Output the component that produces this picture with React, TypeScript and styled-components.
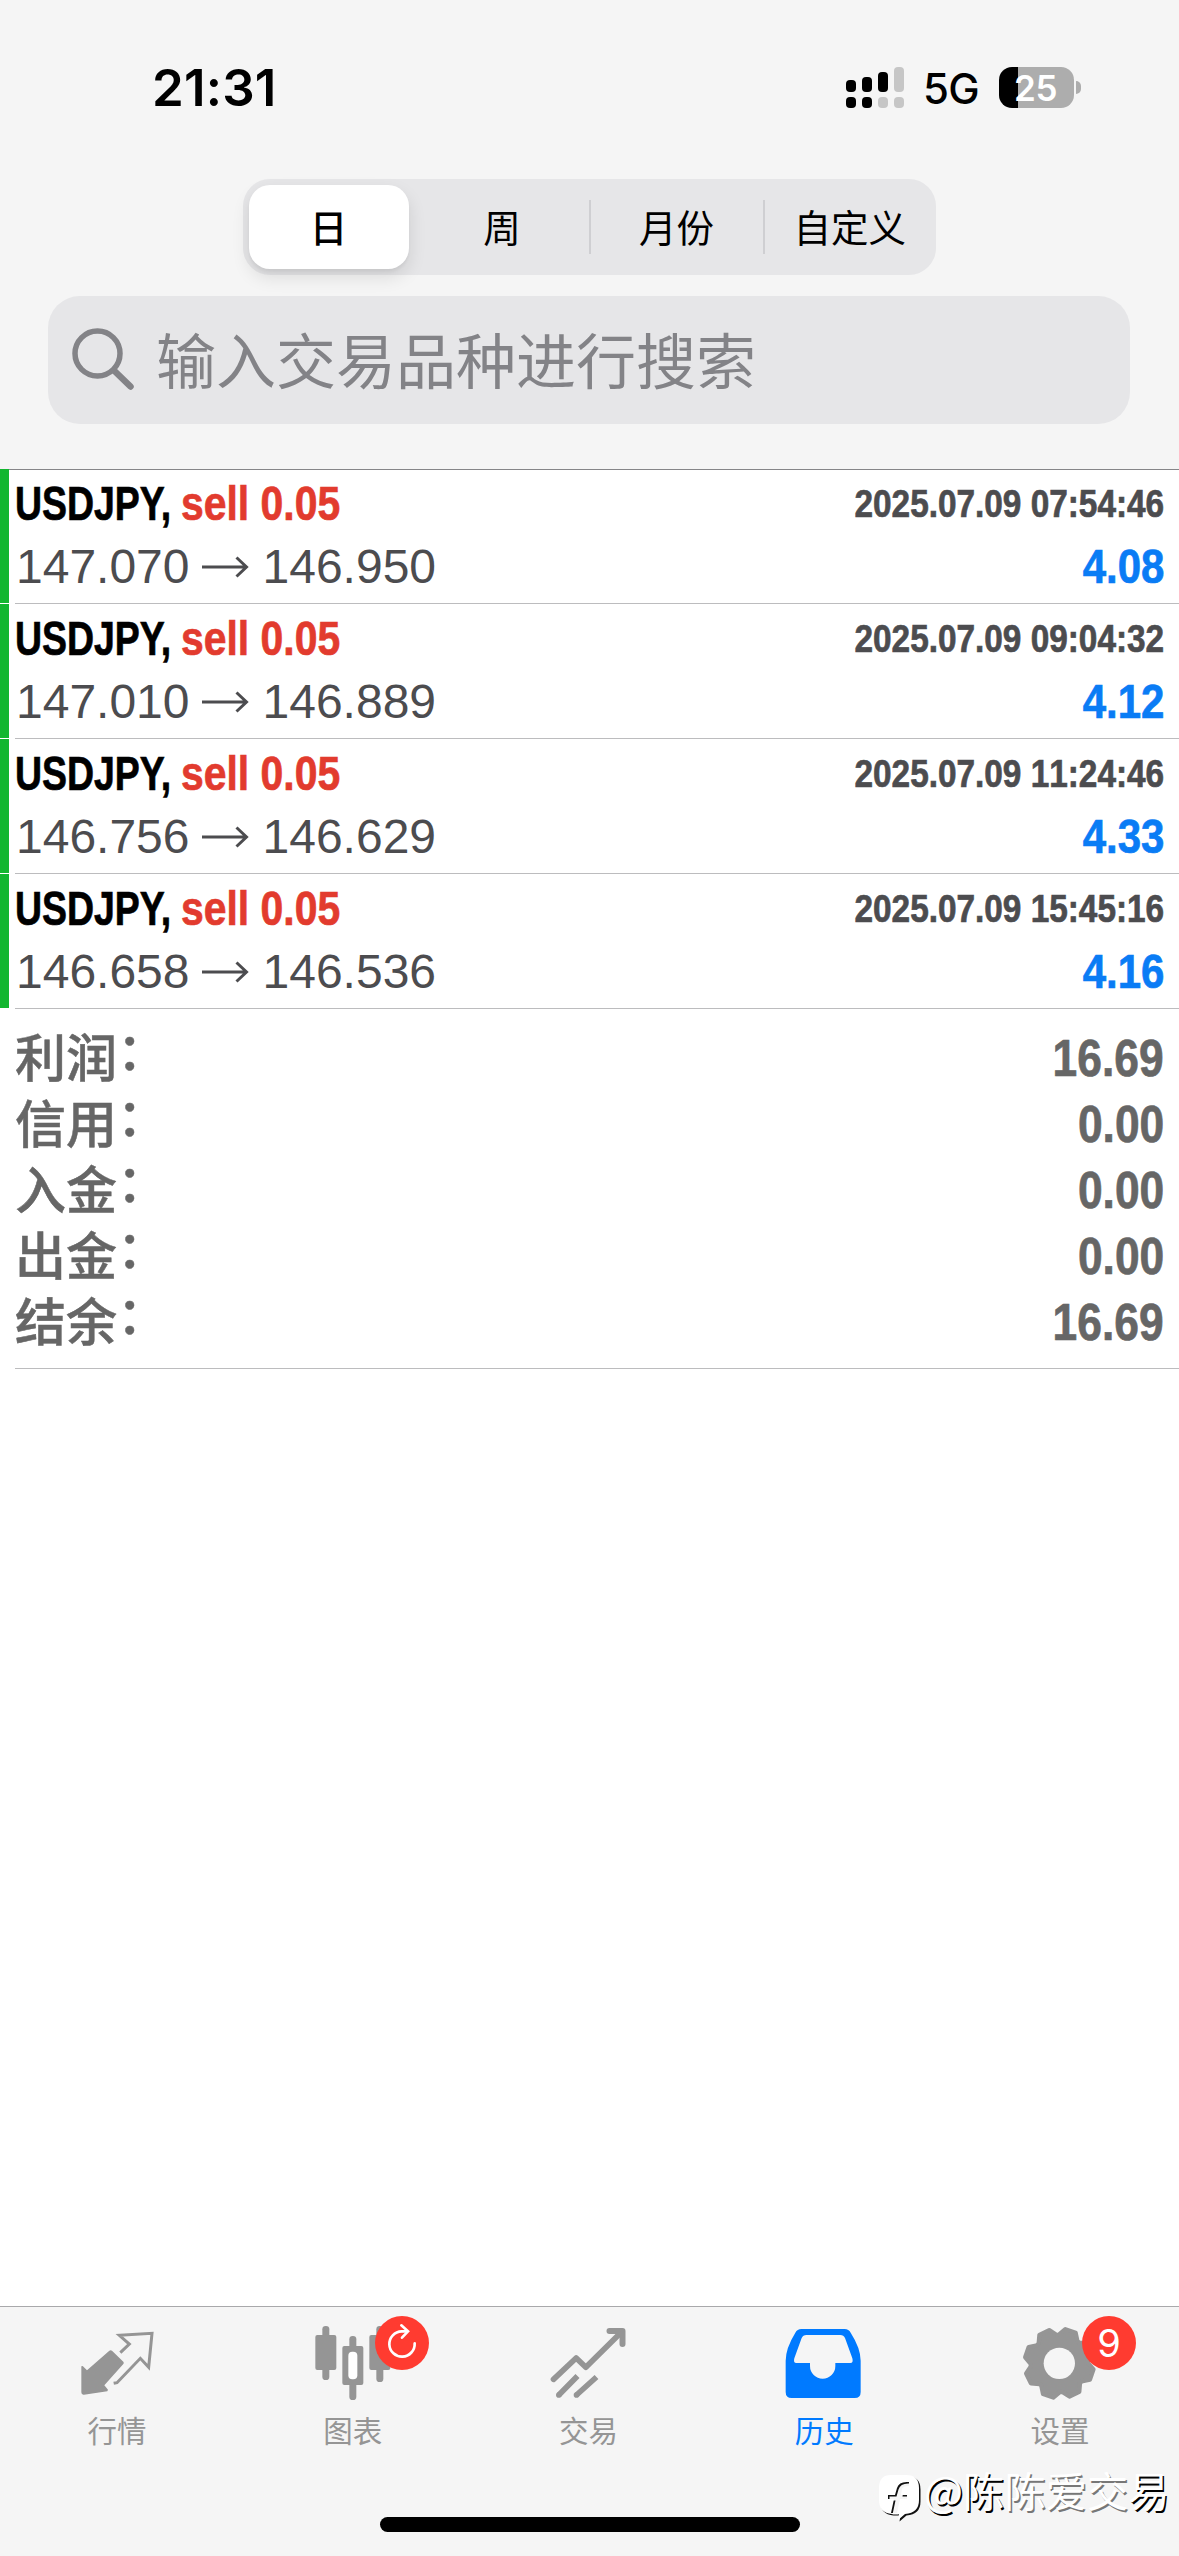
import React from "react";
import styled, { createGlobalStyle } from "styled-components";

const latin = `"Liberation Sans", Arial, "Noto Sans CJK SC", sans-serif`;
const cjk = `"Noto Sans CJK SC", "Liberation Sans", sans-serif`;

const Global = createGlobalStyle`
  *, *::before, *::after { box-sizing: border-box; }
  body { margin: 0; background: #fff; font-family: ${latin}; }
`;

const Screen = styled.div`
  position: relative;
  display: flex;
  flex-direction: column;
  width: 1179px;
  height: 2556px;
  overflow: hidden;
  background: #fff;
`;

const Header = styled.header`
  display: flex;
  flex-direction: column;
  height: 470px;
  background: #f5f5f5;
  border-bottom: 1px solid #858588;
`;

const StatusBar = styled.div`
  display: flex;
  justify-content: space-between;
  align-items: center;
  height: 179px;
  padding: 0 98px 4px 152px;
`;

const Clock = styled.span`
  padding-top: 1px;
  font: 600 51px/60px Inter, ${latin};
  letter-spacing: 0.2px;
`;

const StatusIcons = styled.div`
  display: flex;
  align-items: center;
`;

const Network = styled.span`
  width: 76px;
  margin-left: 19px;
  padding-top: 3px;
  font: 500 42px/50px Inter, ${latin};
  letter-spacing: -0.6px;
`;

const Battery = styled.div`
  display: flex;
  align-items: center;
  justify-content: center;
  width: 75px;
  height: 41px;
  padding: 1px 2px 0 0;
  border-radius: 13px;
  background: linear-gradient(to right, #000 19px, #adadad 19px);
  color: #fff;
  font: 600 35px/40px Inter, ${latin};
  letter-spacing: -0.5px;
`;

const BatteryTip = styled.div`
  width: 5px;
  height: 13px;
  margin-left: 2px;
  border-radius: 0 6px 6px 0;
  background: #adadad;
`;

const Segments = styled.div`
  display: flex;
  align-items: center;
  align-self: center;
  width: 693px;
  height: 96px;
  border-radius: 27px;
  background: #e6e6e8;
`;

const Segment = styled.button<{ $active?: boolean; $divided?: boolean }>`
  display: flex;
  align-items: center;
  justify-content: center;
  width: ${(p) => (p.$active ? "160px" : "173.6px")};
  height: ${(p) => (p.$active ? "84px" : "54px")};
  margin: 0 ${(p) => (p.$active ? "7px" : "0")} 0 ${(p) => (p.$active ? "6px" : "0")};
  padding: 0 1px 3px 0;
  border: 0;
  border-left: ${(p) => (p.$divided ? "2px solid #cfcfd2" : "0")};
  border-radius: ${(p) => (p.$active ? "21px" : "0")};
  background: ${(p) => (p.$active ? "#fff" : "transparent")};
  box-shadow: ${(p) => (p.$active ? "0 8px 18px rgba(0,0,0,.11), 0 3px 3px rgba(0,0,0,.04)" : "none")};
  color: #000;
  font: ${(p) => (p.$active ? 500 : 400)} 37.5px/54px ${cjk};
`;

const Search = styled.div`
  display: flex;
  align-items: center;
  height: 128px;
  margin: 21px 49px 0 48px;
  padding-left: 24px;
  border-radius: 32px;
  background: #e6e6e8;
  color: #838387;
  font: 400 60px/86px ${cjk};
`;

const Placeholder = styled.span`
  margin: 0 0 4px 20px;
`;

const DealList = styled.main`
  margin-top: -1px;
`;

const Deal = styled.article`
  display: flex;
  height: 135px;
  background: linear-gradient(#12b62f, #12b62f) 0 0 / 9px 134px no-repeat;
  padding-left: 15px;
`;

const DealBody = styled.div`
  display: flex;
  flex: 1;
  flex-direction: column;
  padding: 6px 15px 0 0;
  border-bottom: 1px solid #bcbcbe;
`;

const Line = styled.div`
  display: flex;
  justify-content: space-between;
  align-items: center;
`;

const Group = styled.div`
  display: flex;
  align-items: center;
`;

const Condensed = styled.span<{
  $size: number;
  $scale: number;
  $color: string;
  $width?: number;
  $end?: boolean;
}>`
  display: block;
  width: ${(p) => (p.$width ? `${p.$width}px` : "auto")};
  color: ${(p) => p.$color};
  font: 700 ${(p) => p.$size}px/58px ${latin};
  font-kerning: ${(p) => (p.$end ? "none" : "normal")};
  -webkit-text-stroke: 0.7px currentColor;
  white-space: nowrap;
  transform: scaleX(${(p) => p.$scale});
  transform-origin: ${(p) => (p.$end ? "right" : "left")} center;
`;

const Prices = styled.div`
  display: flex;
  align-items: center;
  height: 68px;
  padding-left: 1px;
  color: #4c4c4f;
  font: 400 48px/68px ${latin};
`;

const ArrowSvg = styled.svg`
  width: 47px;
  height: 24px;
  margin: 0 14px 0 12px;
`;

const Summary = styled.section`
  display: flex;
  flex-direction: column;
  height: 360px;
  margin-left: 15px;
  padding: 17px 15px 0 0;
  border-bottom: 1px solid #bcbcbe;
`;

const SummaryRow = styled.div`
  display: flex;
  align-items: center;
  justify-content: space-between;
  height: 66px;
`;

const SummaryLabel = styled.span`
  padding-top: 1px;
  color: #666;
  font: 500 51px/65px ${latin};
  -webkit-text-stroke: 0.5px currentColor;
`;

const Colon = styled.span`
  display: inline-block;
  transform: translateY(-7px);
`;

const TabBar = styled.nav`
  display: flex;
  height: 250px;
  margin-top: auto;
  padding-top: 16px;
  border-top: 1px solid #a9a9ab;
  background: #f5f5f5;
`;

const Tab = styled.div<{ $active?: boolean }>`
  display: flex;
  flex: 1;
  flex-direction: column;
  align-items: center;
  color: ${(p) => (p.$active ? "#007aff" : "#959595")};
`;

const TabLabel = styled.span`
  padding-right: 2px;
  font: 400 29.5px/40px ${cjk};
`;

const TabIcon = styled.div`
  position: relative;
  width: 80px;
  height: 80px;
  margin-bottom: 6px;
`;

const Glyph = styled.svg`
  display: block;
  width: 80px;
  height: 80px;
`;

const Badge = styled.div`
  position: absolute;
  top: -7px;
  left: 61px;
  display: flex;
  align-items: center;
  justify-content: center;
  width: 54px;
  height: 54px;
  border-radius: 50%;
  background: #ff3b30;
  color: #fff;
  font: 400 38px/54px Inter, ${latin};
`;

const Watermark = styled.div`
  position: absolute;
  left: 878px;
  top: 2466px;
  display: flex;
  align-items: center;
  color: #fff;
  white-space: nowrap;
`;

const Handle = styled.span<{ $soft?: boolean }>`
  margin-bottom: 15px;
  font: 400 41.3px/46px ${cjk};
  text-shadow: 1.5px 1.5px 0.5px ${(p) => (p.$soft ? "#777" : "#000")};
`;

const HomeIndicator = styled.div`
  position: absolute;
  left: 380px;
  top: 2517px;
  width: 420px;
  height: 15px;
  border-radius: 8px;
  background: #000;
`;

const deals = [
  { open: "147.070", close: "146.950", time: "2025.07.09 07:54:46", profit: "4.08" },
  { open: "147.010", close: "146.889", time: "2025.07.09 09:04:32", profit: "4.12" },
  { open: "146.756", close: "146.629", time: "2025.07.09 11:24:46", profit: "4.33" },
  { open: "146.658", close: "146.536", time: "2025.07.09 15:45:16", profit: "4.16" },
];

const totals = [
  ["利润", "16.69"],
  ["信用", "0.00"],
  ["入金", "0.00"],
  ["出金", "0.00"],
  ["结余", "16.69"],
];

const gearPath = (() => {
  const points: string[] = [];
  const at = (deg: number, r: number) => {
    const a = (deg * Math.PI) / 180;
    points.push(`${(598 + r * Math.cos(a)).toFixed(1)} ${(220 + r * Math.sin(a)).toFixed(1)}`);
  };
  for (let k = 0; k < 8; k += 1) {
    const c = 19 + 45 * k;
    at(c - 20, 86);
    at(c - 9, 104);
    at(c + 9, 104);
    at(c + 20, 86);
  }
  return `M${points.join("L")}Z`;
})();

const Signal = () => (
  <svg width="58" height="42" viewBox="0 0 58 42">
    <g fill="#000">
      <rect x="0" y="13" width="10" height="12" rx="4" />
      <rect x="16" y="10" width="10" height="15" rx="4" />
      <rect x="32" y="5" width="10" height="20" rx="4" />
      <rect x="0" y="30" width="10" height="11" rx="4" />
      <rect x="16" y="30" width="10" height="11" rx="4" />
    </g>
    <g fill="#c6c6c6">
      <rect x="48" y="0" width="10" height="25" rx="4" />
      <rect x="32" y="30" width="10" height="11" rx="4" />
      <rect x="48" y="30" width="10" height="11" rx="4" />
    </g>
  </svg>
);

const SearchIcon = () => (
  <svg width="64" height="64" viewBox="0 0 64 64" fill="none" stroke="currentColor" strokeLinecap="round">
    <circle cx="25.500" cy="25.500" r="22.500" strokeWidth="5.500" />
    <path d="M42 42.500L58.500 58.500" strokeWidth="6.500" />
  </svg>
);

const Arrow = () => (
  <ArrowSvg viewBox="0 0 47 24" fill="none" stroke="currentColor" strokeWidth="3">
    <path d="M0 12H44M34.500 2.500L44.500 12L34.500 21.500" />
  </ArrowSvg>
);

const QuotesIcon = () => (
  <Glyph viewBox="114 99 240 240">
    <path
      d="M208 182Q212 179 216 182L250 215Q253 219 250 222L193 286L204 299L202 304L132 314Q124 315 124 307V229L128 228L141 241Z"
      fill="currentColor"
    />
    <path
      d="M241 188L268 162L238 136L336 130L326 232L301 205L231 278L221 280"
      fill="none"
      stroke="currentColor"
      strokeWidth="9"
    />
  </Glyph>
);

const ChartIcon = () => (
  <Glyph viewBox="821 99 240 240" fill="currentColor">
    <rect x="846" y="108" width="21" height="162" rx="10" />
    <rect x="825" y="135" width="63" height="105" rx="6" />
    <rect x="927" y="138" width="21" height="192" rx="10" />
    <rect x="906" y="168" width="63" height="117" rx="6" />
    <rect x="924" y="185" width="27" height="83" rx="12" fill="#fff" />
    <rect x="1008" y="108" width="21" height="168" rx="10" />
    <rect x="987" y="135" width="63" height="105" rx="6" />
  </Glyph>
);

const TradeIcon = () => (
  <Glyph viewBox="148.500 99 240 240" fill="none" stroke="currentColor" strokeWidth="17">
    <path d="M162 268L230 204L259 232L366 126" strokeLinejoin="round" strokeLinecap="round" />
    <path d="M330 123H369V162" strokeWidth="18" strokeLinecap="round" strokeLinejoin="round" />
    <path d="M178 315L234 258M231 315L291 261" />
    <g fill="currentColor" stroke="none">
      <circle cx="178" cy="315" r="8.500" />
      <circle cx="231" cy="315" r="8.500" />
    </g>
  </Glyph>
);

const HistoryIcon = () => (
  <Glyph viewBox="856 99 240 240">
    <path
      fill="currentColor"
      fillRule="evenodd"
      d="M905 117H1035Q1047 117 1053 128Q1083 175 1083 212V306Q1083 324 1065 324H876Q858 324 858 306V212Q858 175 887 128Q893 117 905 117Z M920 135H1022Q1032 135 1036 144L1058 205Q1062 219 1052 219H1007V228A38 38 0 0 1 931 228V219H890Q880 219 884 205L906 144Q910 135 920 135Z"
    />
  </Glyph>
);

const SettingsIcon = () => (
  <Glyph viewBox="483 99 240 240">
    <path d={gearPath} fill="currentColor" stroke="currentColor" strokeWidth="13" strokeLinejoin="round" />
    <circle cx="598" cy="220" r="47" fill="#f5f5f5" />
  </Glyph>
);

const RefreshIcon = () => (
  <svg width="54" height="54" viewBox="0 0 162 162" fill="none" stroke="#fff" strokeWidth="8" strokeLinecap="round">
    <path d="M119 82A38 38 0 1 1 80 46H96" />
    <path d="M79 28L99 46L81 65" />
  </svg>
);

const logoPath =
  "M13 4H28Q41 4 41 17V29Q41 42 27 43L20 49L21 43H14Q1 42 1 29V17Q1 4 13 4ZM10 24V28H16L13 42H19L22 28H29V24H23L24 18Q25 15 31 15V11Q21 10 19 17L17 24Z";

const WatermarkLogo = () => (
  <svg width="46" height="52" viewBox="0 0 46 52">
    <g fillRule="evenodd">
      <path transform="translate(1.500 1.500)" fill="#111" d={logoPath} />
      <path fill="#fff" d={logoPath} />
    </g>
  </svg>
);

export default function App() {
  return (
    <Screen>
      <Global />
      <Header>
        <StatusBar>
          <Clock>21:31</Clock>
          <StatusIcons>
            <Signal />
            <Network>5G</Network>
            <Battery>25</Battery>
            <BatteryTip />
          </StatusIcons>
        </StatusBar>
        <Segments>
          <Segment $active>日</Segment>
          <Segment>周</Segment>
          <Segment $divided>月份</Segment>
          <Segment $divided>自定义</Segment>
        </Segments>
        <Search>
          <SearchIcon />
          <Placeholder>输入交易品种进行搜索</Placeholder>
        </Search>
      </Header>

      <DealList>
        {deals.map((deal) => (
          <Deal key={deal.time}>
            <DealBody>
              <Line>
                <Group>
                  <Condensed $size={48} $scale={0.78} $color="#000" $width={166}>
                    USDJPY,
                  </Condensed>
                  <Condensed $size={48} $scale={0.852} $color="#e23b2e">
                    sell 0.05
                  </Condensed>
                </Group>
                <Condensed $size={39} $scale={0.855} $color="#4c4c4f" $end>
                  {deal.time}
                </Condensed>
              </Line>
              <Line>
                <Prices>
                  {deal.open}
                  <Arrow />
                  {deal.close}
                </Prices>
                <Condensed $size={48} $scale={0.875} $color="#0a7cf5" $end>
                  {deal.profit}
                </Condensed>
              </Line>
            </DealBody>
          </Deal>
        ))}
        <Summary>
          {totals.map(([label, value]) => (
            <SummaryRow key={label}>
              <SummaryLabel>
                {label}
                <Colon>：</Colon>
              </SummaryLabel>
              <Condensed $size={51} $scale={0.87} $color="#666" $end>
                {value}
              </Condensed>
            </SummaryRow>
          ))}
        </Summary>
      </DealList>

      <TabBar>
        <Tab>
          <TabIcon>
            <QuotesIcon />
          </TabIcon>
          <TabLabel>行情</TabLabel>
        </Tab>
        <Tab>
          <TabIcon>
            <ChartIcon />
            <Badge>
              <RefreshIcon />
            </Badge>
          </TabIcon>
          <TabLabel>图表</TabLabel>
        </Tab>
        <Tab>
          <TabIcon>
            <TradeIcon />
          </TabIcon>
          <TabLabel>交易</TabLabel>
        </Tab>
        <Tab $active>
          <TabIcon>
            <HistoryIcon />
          </TabIcon>
          <TabLabel>历史</TabLabel>
        </Tab>
        <Tab>
          <TabIcon>
            <SettingsIcon />
            <Badge>9</Badge>
          </TabIcon>
          <TabLabel>设置</TabLabel>
        </Tab>
      </TabBar>

      <Watermark>
        <WatermarkLogo />
        <Handle>@陈</Handle>
        <Handle $soft>陈爱交</Handle>
        <Handle>易</Handle>
      </Watermark>
      <HomeIndicator />
    </Screen>
  );
}
